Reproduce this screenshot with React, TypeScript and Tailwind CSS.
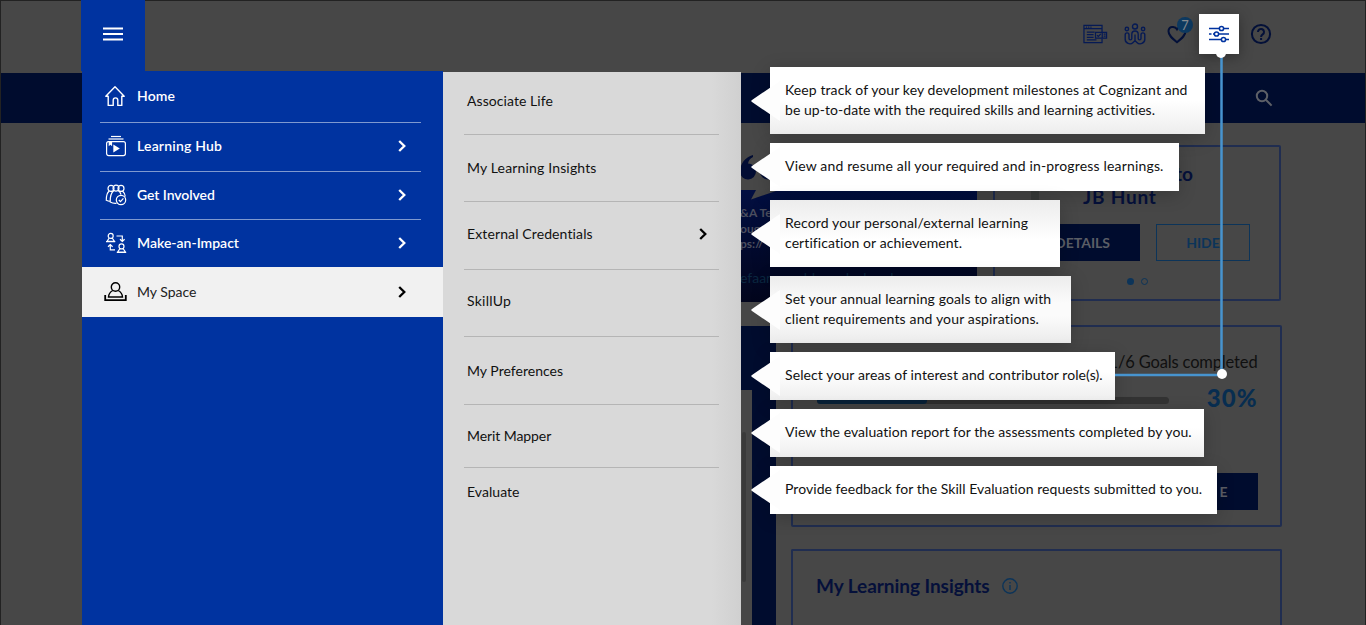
import React from "react";

const menu = [
  { label: "Home", icon: "home", row: "h-[52px] border-b pb-[2px]", track: "tracking-[0.15px]", arrow: false },
  { label: "Learning Hub", icon: "hub", row: "h-[49px] border-b pb-[2px]", track: "pb-[2px] tracking-[0.2px]", arrow: true },
  { label: "Get Involved", icon: "involved", row: "h-[48px] border-b pb-[2px]", track: "tracking-[-0.07px]", arrow: true },
  { label: "Make-an-Impact", icon: "impact", row: "h-[47px] pb-[2px]", track: "tracking-[0px]", arrow: true },
];

const submenu = [
  { label: "Associate Life", row: "h-[63px] border-b pb-[6px]", track: "tracking-[0.07px]" },
  { label: "My Learning Insights", row: "h-[67px] border-b pb-[2px]", track: "tracking-[0.16px]" },
  { label: "External Credentials", row: "h-[68px] border-b pb-[4px]", track: "tracking-[0.12px]", arrow: true },
  { label: "SkillUp", row: "h-[67px] border-b pb-[6px]", track: "tracking-[0.25px]" },
  { label: "My Preferences", row: "h-[68px] border-b", track: "tracking-[0.02px]" },
  { label: "Merit Mapper", row: "h-[63px] border-b pb-[2px]", track: "tracking-[-0.08px]" },
  { label: "Evaluate", row: "h-[49px] border-b-0 pb-[2px]", track: "tracking-[0.05px]" },
];

const tips = [
  { lines: ["Keep track of your key development milestones at Cognizant and", "be up-to-date with the required skills and learning activities."], box: "w-[435px] h-[67px] bg-[linear-gradient(#fff_50%,#ededed)]", tracks: ["tracking-[0.09px]", "tracking-[0.05px]"] },
  { lines: ["View and resume all your required and in-progress learnings."], box: "w-[409px] h-[48px] bg-white", tracks: ["tracking-[0.165px]"] },
  { lines: ["Record your personal/external learning", "certification or achievement."], box: "w-[290px] h-[67px] bg-[linear-gradient(#ececec,#fff_60%)]", tracks: ["tracking-[0.14px]", "tracking-[0.08px]"] },
  { lines: ["Set your annual learning goals to align with", "client requirements and your aspirations."], box: "w-[301px] h-[67px] bg-[linear-gradient(#ececec,#fbfbfb_40%,#fbfbfb_60%,#ebebeb)]", tracks: ["tracking-[0.1px]", "tracking-[0.14px]"] },
  { lines: ["Select your areas of interest and contributor role(s)."], box: "w-[345px] h-[48px] bg-[linear-gradient(#fff_40%,#eee)]", tracks: ["tracking-[0.1px]"] },
  { lines: ["View the evaluation report for the assessments completed by you."], box: "w-[434px] h-[48px] bg-[linear-gradient(#fff_40%,#eee)]", tracks: ["tracking-[0.045px]"] },
  { lines: ["Provide feedback for the Skill Evaluation requests submitted to you."], box: "w-[447px] h-[48px] bg-white", tracks: ["tracking-[0.05px]"] },
];

function Chevron({ className = "" }: { className?: string }) {
  return (
    <svg className={className} width="8" height="12" viewBox="0 0 8 12" fill="none" stroke="currentColor" strokeWidth="2.3">
      <path d="M1.2 1 6.3 6 1.2 11" />
    </svg>
  );
}

function MenuIcon({ name }: { name: string }) {
  const p = { width: 22, height: 22, viewBox: "0 0 22 22", fill: "none", stroke: "currentColor", strokeWidth: 1.2 };
  if (name === "home")
    return (
      <svg {...p} strokeWidth={1.4} strokeLinejoin="round">
        <path d="M.8 11.2 10 1.8l9.2 9.4h-2.4v9.2h-4v-5.200a2.300 2.300 0 0 0-4.600 0v5.200h-5v-9.200z" />
      </svg>
    );
  if (name === "hub")
    return (
      <svg {...p}>
        <path d="M6 1.500h10" strokeWidth={1.200} />
        <path d="M3.500 4h15" strokeWidth={2} strokeOpacity={0.6} />
        <rect x="1.600" y="6.600" width="18.800" height="14" rx="2" />
        <path d="M3.700 7v4.200l1.700-1.500 1.700 1.500V7z" fill="currentColor" stroke="none" />
        <path d="M8.300 9.500v8l6.500-4z" fill="currentColor" stroke="none" />
      </svg>
    );
  if (name === "involved")
    return (
      <svg {...p}>
        <circle cx="6" cy="4.400" r="3" /><circle cx="11" cy="4.200" r="3" /><circle cx="16" cy="4.400" r="3" />
        <path d="M4.300 7C2 8.800 1.200 12 1.300 16.300c1.300.7 2.500 1 3.900 1.100M8.700 6.500C6 9 5 13 5.200 18c1.800 1.100 3.900 1.500 6.300 1.300M13.400 6.500c1.200 1 2 2.200 2.600 4M17.500 7c1.700 1.500 2.500 3.200 2.800 5.500M7.800 8.500 6 7.100" />
        <circle cx="16" cy="16" r="4.700" /><path d="m13.800 16 1.700 1.600 2.900-3.300" />
      </svg>
    );
  if (name === "impact")
    return (
      <svg {...p}>
        <circle cx="5.700" cy="3.900" r="2.500" /><path d="M4.200 6 2 9.400h7.500L7.200 6M1 9.700h9.200" />
        <circle cx="16.500" cy="14.400" r="2.500" /><path d="M15 16.500 12.700 20h7.700L18 16.500M11.800 20.400h9.300" />
        <path d="M11.500 4h5.800v5M15 7.300l2.300 2.200 2.300-2.200M10 17.900H5.300v-5M3 14.700l2.300-2.200 2.300 2.200" />
      </svg>
    );
  return (
    <svg {...p} strokeWidth={1.400} overflow="visible">
      <circle cx="10.500" cy="6" r="4.200" />
      <path d="M7.800 9.500c-2.900 1.500-4.100 3.700-4.300 6.500h14c-.2-2.800-1.400-5-4.300-6.500" />
      <path d="M.2 14v5.200h20.600V14" strokeWidth={1.800} />
    </svg>
  );
}

function HeaderIcons() {
  return (
    <div className="flex h-[72px] items-center pb-[6px] pl-[1082px] text-[#061a54]">
      <svg width="25" height="22" viewBox="0 0 26 22" fill="none" stroke="currentColor" strokeWidth="1.300">
        <path d="M19.800 9V2H1v18h18.800v-4M1 5.500h18.800M3 3.800h1.300m1 0h1.300m1 0h1.300M4 9h8M4 11.700h7M4 14.400h7M4 17.100h10" />
        <path d="M13 9.300h11.500v6H13zM20 9.500v5.600" /><path d="m14.500 12.200 1.500 1.300 2.500-2.600M21.500 11h2M21.500 13.200h2" />
      </svg>
      <svg className="ml-[16px]" width="22" height="22" viewBox="0 0 22 22" fill="none" stroke="currentColor" strokeWidth="1.400">
        <circle cx="2.900" cy="6" r="1.700" /><circle cx="11" cy="3.500" r="2.500" /><circle cx="19.100" cy="6" r="1.700" />
        <path d="M1.200 11.800a1.900 1.900 0 0 1 3.800 0v3.700a1.400 1.400 0 0 0 2.800 0V11.200a3.200 3.200 0 0 1 6.400 0v4.300a1.400 1.400 0 0 0 2.800 0v-3.700a1.900 1.900 0 0 1 3.800 0v4.400a4.600 4.600 0 0 1-7.900 3.200L11 17.600l-1.900 1.800a4.600 4.600 0 0 1-7.900-3.200zM11 11.500v6" />
      </svg>
      <div className="relative ml-[21px] h-[20px] w-[22px] text-[#031038]">
        <svg className="mt-px" width="20" height="19" viewBox="0 0 20 19" fill="none" stroke="currentColor" strokeWidth="2">
          <path d="M10 17.300C4.500 12.800 1.500 10 1.500 6.300c0-5.200 6.500-5.600 8.500-2 2-3.600 8.500-3.200 8.500 2 0 3.700-3 6.500-8.500 11z" />
        </svg>
        <span className="absolute -top-[7px] left-[10px] flex size-4 items-center justify-center rounded-full bg-[#0d3960] text-[13px] leading-none text-[#868a8f]">7</span>
      </div>
      <svg className="ml-[61px] text-[#031038]" width="22" height="22" viewBox="0 0 22 22" fill="none" stroke="currentColor" strokeWidth="2">
        <circle cx="11" cy="11" r="9.100" /><path d="M8 9a3 3 0 1 1 4.700 2.400c-1 .7-1.600 1.100-1.600 2.500M11.100 15v2" />
      </svg>
    </div>
  );
}

function Backdrop() {
  return (
    <div className="h-[625px] border border-b-0 border-[#222] bg-[#474747]">
      <HeaderIcons />
      <div className="flex h-[50px] items-center bg-[#000c2e] pl-[1254px] text-[#5d6067]">
        <svg width="18" height="18" viewBox="0 0 18 18" fill="none" stroke="currentColor" strokeWidth="2">
          <circle cx="7" cy="7" r="5.200" /><path d="m10.800 10.800 5.800 5.800" />
        </svg>
      </div>
      <div className="flex pl-[739px]">
        <div className="flex w-[36px] flex-col">
          <div className="h-[67px] w-[237px] pt-[32px]">
            <svg width="38" height="26" viewBox="0 0 38 26" fill="#020d33"><path d="M13 0C5 2 0 9 0 17a8 8 0 1 0 8-8.500c.5-3 2-5 5-6.500zM32 0c-8 2-12 9-12 17a8 8 0 1 0 8-8.500z" /></svg>
          </div>
          <div className="h-[112px] w-[237px] overflow-hidden bg-[linear-gradient(#020f42,#02051c)] text-[12px] font-bold leading-[15.500px] text-[#4c4f5f]">
            <svg className="block" width="36" height="10" viewBox="0 0 36 10"><path d="M16 0h20v1L11 9.500z" fill="#474747" /></svg>
            <div className="mt-[5px] whitespace-nowrap">&amp;A Te</div>
            <div>oug</div>
            <div>ps://</div>
            <div className="mt-[18px] whitespace-nowrap text-[14px] font-normal text-[#0b2740]">efaan would need a break</div>
          </div>
          <div className="mt-[24px] h-[64px] bg-[#000c2e]" />
          <div className="flex h-[235px]">
            <div className="w-[12px] pl-[2px] pt-[42px]"><div className="h-[150px] w-[4px] rounded-full bg-[#3a3a3a]" /></div>
            <div className="flex-1 bg-[#000c2e]" />
          </div>
        </div>
        <div className="flex w-[504px] flex-col">
          <div className="ml-[217px] mt-[22px] flex h-[156px] w-[288px] rounded-[2px] border-2 border-[#202d50]">
            <div className="ml-[36px] mt-[40px] h-[40px] w-[8px] bg-[#3a3d3c]" />
            <div className="flex flex-1 flex-col">
              <div className="pl-[44px] pt-[15px] text-[19px] font-bold leading-[23px] text-[#05103a]">
                <div className="pl-[92px]">to</div>
                <div className="tracking-[0.800px]">JB Hunt</div>
              </div>
              <div className="mt-[16px] flex gap-[16px] text-[14px] font-bold">
                <div className="flex h-[37px] w-[101px] items-center justify-end bg-[#000c2e] pr-[30px] text-[#5b5e66]">DETAILS</div>
                <div className="flex h-[37px] w-[94px] items-center justify-center border border-[#0c3459] text-[#0c3459]">HIDE</div>
              </div>
              <div className="mt-[17px] flex gap-[7px] pl-[88px]">
                <div className="size-[7px] rounded-full bg-[#0c3459]" />
                <div className="size-[7px] rounded-full border border-[#0c3459]" />
              </div>
            </div>
          </div>
          <div className="ml-[15px] mt-[24px] flex h-[202px] w-[491px] flex-col rounded-[2px] border-2 border-[#202d50] pl-[24px] pr-[22.500px] pt-[23px]">
            <div className="text-right text-[16.500px] leading-[24px] tracking-[-0.150px] text-[#101010]">1/6 Goals completed</div>
            <div className="mt-[11px] flex items-center justify-between">
              <div className="mt-[4px] h-[7px] w-[352px] rounded-full bg-[#333]"><div className="h-full w-[110px] rounded-full bg-[#08233c]" /></div>
              <div className="text-[24px] font-black leading-[26px] tracking-[1px] text-[#072d50]">30%</div>
            </div>
            <div className="mt-[62px] flex h-[37px] w-[130px] shrink-0 items-center justify-end self-end bg-[#000c2e] pr-[30px] text-[14px] font-bold text-[#5b5e66]">E</div>
          </div>
          <div className="ml-[15px] mt-[22px] flex h-[76px] w-[491px] items-center gap-[12px] overflow-hidden rounded-t-[2px] border-2 border-b-0 border-[#202d50] pb-[4px] pl-[23px] text-[19px] font-bold text-[#05103a]">
            <span className="tracking-[-0.050px]">My Learning Insights</span>
            <svg width="16" height="16" viewBox="0 0 16 16" fill="none" stroke="#0c3459" strokeWidth="1.400"><circle cx="8" cy="8" r="7.200" /><path d="M8 7v5M8 4v1.500" /></svg>
          </div>
        </div>
      </div>
    </div>
  );
}

function Navigation() {
  return (
    <div className="absolute left-[81px] top-0 flex h-[625px] w-[660px] flex-col text-[14px]">
      <div className="flex h-[71px] w-[64px] items-center justify-center bg-[#0033a0]">
        <svg className="-mt-[3px]" width="20" height="14" viewBox="0 0 20 14" stroke="#fff" strokeWidth="2"><path d="M0 1.500h20M0 7h20M0 12.500h20" /></svg>
      </div>
      <div className="flex flex-1 pl-px">
        <nav className="w-[361px] bg-[#0033a0] text-white">
          {menu.map((m) => (
            <div key={m.label} className={`ml-[18px] mr-[22px] flex items-center border-[#7f99cf] pl-[5px] pr-[15px] ${m.row}`}>
              <MenuIcon name={m.icon} />
              <span className={`ml-[10px] flex-1 font-semibold ${m.track}`}>{m.label}</span>
              {m.arrow && <Chevron />}
            </div>
          ))}
          <div className="flex h-[50px] items-center bg-[#f1f1f1] pl-[23px] pr-[37px] text-black">
            <MenuIcon name="space" />
            <span className="ml-[10px] flex-1 pb-[2px] text-[#222]">My Space</span>
            <Chevron />
          </div>
        </nav>
        <div className="mt-px w-[298px] bg-[linear-gradient(90deg,#d9d9d9_90%,#d0d0d0)] pl-[21px] pr-[22px] text-[#111]">
          {submenu.map((s) => (
            <div key={s.label} className={`flex items-center justify-between border-[#b5b5b5] pl-[3px] pr-[12px] ${s.row}`}>
              <span className={s.track}>{s.label}</span>
              {s.arrow && <Chevron className="text-black" />}
            </div>
          ))}
        </div>
      </div>
    </div>
  );
}

function Callouts() {
  return (
    <div className="absolute left-[751px] top-[67px] flex flex-col gap-[9px] text-[14px] leading-[20px] text-[#111]">
      {tips.map((t) => (
        <div key={t.lines[0]} className="flex items-center">
          <svg className="relative z-10 -mr-[10px] shrink-0" width="29" height="40" viewBox="0 0 29 40"><path d="M29 0v40L1 21q-1.500-1 0-2z" fill="#fdfdfd" /></svg>
          <div className={`flex flex-col justify-center whitespace-nowrap pb-[2px] pl-[15px] shadow-[0_4px_18px_rgba(0,0,0,0.2)] ${t.box}`}>
            {t.lines.map((l, i) => (
              <div key={l}><span className={t.tracks[i]}>{l}</span></div>
            ))}
          </div>
        </div>
      ))}
    </div>
  );
}

export default function App() {
  return (
    <div className="relative h-[625px] w-[1366px] overflow-hidden font-[Lato,sans-serif]">
      <Backdrop />
      <svg className="absolute left-[1100px] top-[50px] z-10" width="132" height="334" viewBox="0 0 132 334">
        <path d="M121.500 3v322H15" fill="none" stroke="#4794cf" strokeWidth="2.500" />
        <circle cx="121" cy="3" r="5" fill="#fff" /><circle cx="122" cy="324" r="5" fill="#fff" />
      </svg>
      <div className="absolute left-[1199px] top-[14px] flex size-[40px] items-center justify-center bg-white text-[#0033a0] shadow-[0_3px_14px_rgba(0,0,0,0.35)]">
        <svg width="20" height="18" viewBox="0 0 20 18" fill="none" stroke="currentColor" strokeWidth="1.500">
          <path d="M0 3.500h10M15 3.500h5M0 9h2.500M4 9h1.500M10 9h10M0 14.500h12M17 14.500h3" />
          <circle cx="12.500" cy="3.500" r="2.100" /><circle cx="7.500" cy="9" r="2.100" /><circle cx="14.500" cy="14.500" r="2.100" />
        </svg>
      </div>
      <Navigation />
      <Callouts />
    </div>
  );
}
